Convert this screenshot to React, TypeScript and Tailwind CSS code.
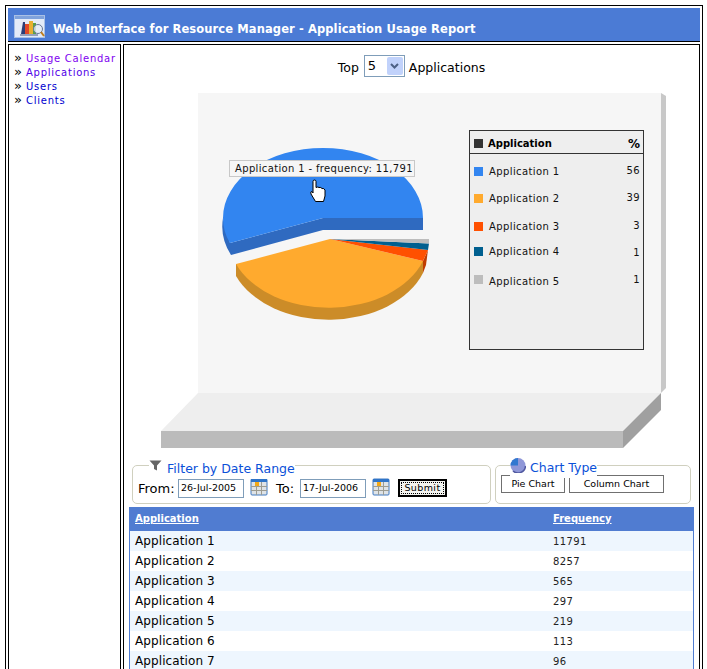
const dv = "font-['DejaVu_Sans',Verdana,sans-serif]";

function HeaderIcon() {
  return (
    <svg width="32" height="23" viewBox="0 0 32 23" className="shrink-0">
      <rect x="0.5" y="0.5" width="30" height="22" fill="#e4ebf8" stroke="#a9c0e6" />
      <rect x="1" y="1" width="29" height="3" fill="#7fa2dc" />
      <path d="M7 19 L9 7 L11 7 L11 19 Z" fill="#2c3e78" />
      <rect x="11" y="9" width="4" height="10" fill="#e04828" />
      <rect x="15" y="6" width="4" height="13" fill="#e8b030" />
      <rect x="19" y="8" width="3" height="11" fill="#58a048" />
      <path d="M6 20 H24" stroke="#44557f" strokeWidth="1" />
      <circle cx="24" cy="14" r="4.5" fill="#e6edf6" fillOpacity="0.8" stroke="#6a7896" />
      <path d="M27 17 L30 21" stroke="#c08020" strokeWidth="2" />
    </svg>
  );
}

function Chart() {
  return (
    <svg width="575" height="372" viewBox="124 84 575 372" className="block" fontFamily="'DejaVu Sans',Verdana,sans-serif">
      <rect x="198" y="93" width="463" height="300" fill="#f6f6f6" />
      <path d="M661 93 L666 96 V388 L661 393 Z" fill="#c8c8c8" />
      <path d="M198 393 H661 L623 431 H161 Z" fill="#eeeeee" />
      <rect x="161" y="431" width="462" height="17" fill="#bbbbbb" />
      <path d="M623 431 L661 393 V410 L623 448 Z" fill="#a0a0a0" />

      {/* blue slice */}
      <path d="M223 218 A100 70 0 0 0 231 255 L323 230 H423 V218 H323 L230 243 Z" fill="#2f6ac0" />
      <path d="M323 218 H423 A100 70 0 0 0 223 218 Q223 232 230 243 Z" fill="#3285f0" />

      {/* lower pie sides */}
      <path d="M236 264 V276 A100 70 0 0 0 423 273 V261 Z" fill="#cc8c28" />
      <path d="M423 261 L428 250 L426 265 L423 273 Z" fill="#c03c00" />
      {/* lower pie tops */}
      <path d="M330 239 L236 264 A100 70 0 0 0 423 261 Z" fill="#ffaa2e" />
      <path d="M330 239 L423 261 L428 250 Z" fill="#ff5000" />
      <path d="M330 239 L428 250 L429 243.5 Z" fill="#005f8f" />
      <path d="M330 239 L429 243.5 L429 239 Z" fill="#bdbdbd" />

      {/* legend */}
      <rect x="469.5" y="130.5" width="174" height="219" fill="#eeeeee" stroke="#333333" />
      <path d="M470 153.5 H643" stroke="#333333" />
      <rect x="474" y="139" width="9" height="9" fill="#333333" />
      <text x="488" y="147" fontSize="10" fontWeight="700" fill="#000">Application</text>
      <text x="640" y="148" fontSize="12" fontWeight="700" textAnchor="end" fill="#000">%</text>
      {[
        ["Application 1", "56", 167, "#3285f0", 175, 174],
        ["Application 2", "39", 194, "#ffaa2e", 202, 201],
        ["Application 3", "3", 222, "#ff5000", 230, 229],
        ["Application 4", "1", 247, "#005f8f", 255, 256],
        ["Application 5", "1", 275, "#bdbdbd", 285, 283],
      ].map(([name, pct, y, color, ty, py]) => (
        <g key={name as string}>
          <rect x="474" y={y as number} width="9" height="9" fill={color as string} />
          <text x="489" y={ty as number} fontSize="10" letterSpacing="0.4" fill="#111">{name}</text>
          <text x="640" y={py as number} fontSize="10" letterSpacing="0.4" textAnchor="end" fill="#111">{pct}</text>
        </g>
      ))}

      {/* tooltip */}
      <rect x="229.5" y="160.5" width="185" height="16" fill="#f6f6f6" stroke="#c8c8c8" />
      <text x="235" y="172" fontSize="10" letterSpacing="0.35" fill="#111">Application 1 - frequency: 11,791</text>

      {/* hand cursor */}
      <path
        d="M313 181.5 Q313 180 314.5 180 Q316 180 316 181.5 V187.5 Q318 186.5 319 187.5 Q321 187 322 188.5 Q324 188 325 190 V196 L323.5 201.5 H315.5 L311 194 Q310 191.5 312 191.5 L313 193 Z"
        fill="#fff"
        stroke="#000"
        strokeWidth="1"
      />
    </svg>
  );
}

function Cal() {
  return (
    <svg width="18" height="18" viewBox="0 0 18 18" className="shrink-0">
      <rect x="1" y="1" width="16" height="16" rx="1" fill="#dfe3e6" stroke="#3f78c0" />
      <rect x="1" y="1" width="16" height="3" fill="#2f74c8" />
      <path d="M1 8.5 H17 M1 12.5 H17 M6.5 4 V17 M11.5 4 V17" stroke="#9c9c92" />
      <rect x="5" y="4" width="4" height="4" fill="#f2a818" />
    </svg>
  );
}

const rows = [
  ["Application 1", "11791"],
  ["Application 2", "8257"],
  ["Application 3", "565"],
  ["Application 4", "297"],
  ["Application 5", "219"],
  ["Application 6", "113"],
  ["Application 7", "96"],
];

export default function App() {
  return (
    <div className={`w-[707px] h-[669px] overflow-hidden bg-white pt-[5px] pl-[5px] ${dv}`}>
      <div className="w-[698px] h-[700px] border border-black p-[2px]">
        <div className="h-[34px] bg-[#4b7bd5] border-b border-black flex items-center pl-[6px] gap-[7px]">
          <span className="pt-[3px]"><HeaderIcon /></span>
          <span className="pt-[10px] text-white font-bold text-[11.5px] tracking-[0.1px] whitespace-nowrap">
            Web Interface for Resource Manager - Application Usage Report
          </span>
        </div>
        <div className="flex gap-[2px] mt-[2px]">
          <aside className="w-[113px] h-[700px] border border-black pt-[6px] pl-[5px] shrink-0 text-[10px] tracking-[0.75px]">
            {[
              ["Usage Calendar", "text-[#8000f0]"],
              ["Applications", "text-[#5000e8]"],
              ["Users", "text-[#0000d0]"],
              ["Clients", "text-[#0000d0]"],
            ].map(([t, c]) => (
              <div key={t} className="h-[14px] flex items-center whitespace-nowrap">
                <span className="w-[12px] text-black text-[13px] tracking-normal">»</span>
                <span className={c}>{t}</span>
              </div>
            ))}
          </aside>
          <main className="flex-1 h-[700px] border border-black">
            <div className="h-[39px] pt-[2px] flex items-center justify-center gap-[4px] text-[12.5px] text-black">
              <span className="pt-[5px]">Top</span>
              <div className="ml-[1px] w-[41px] h-[22px] border border-[#7f9db9] flex items-center justify-between pl-[3px] pr-[1px] text-[13px]">
                <span>5</span>
                <span className="w-[16px] h-[18px] bg-[#c1d2fb] rounded-[2px] flex items-center justify-center">
                  <svg width="9" height="6" viewBox="0 0 9 6">
                    <path d="M1 1 L4.5 4.5 L8 1" fill="none" stroke="#4d6185" strokeWidth="2" />
                  </svg>
                </span>
              </div>
              <span className="pt-[5px]">Applications</span>
            </div>
            <Chart />
            <div className="flex gap-[4px] pl-[8px] h-[51px] pt-[9px]">
              <fieldset className="relative w-[359px] h-[39px] border border-[#d0d0bf] rounded-[5px] pl-[5px] m-0">
                <div className="absolute -top-[7px] left-[16px] bg-white flex items-start gap-[5px] text-[12.5px] text-[#0a50d8]">
                  <svg width="13" height="11" viewBox="0 0 13 11" className="mt-[1px]">
                    <path d="M0.5 0.5 H12.5 L8 5.5 V10.5 L5 9 V5.5 Z" fill="#666" />
                  </svg>
                  <span className="mt-[1px]">Filter by Date Range</span>
                </div>
                <div className="flex items-center h-full pt-[7px] text-[13px] text-black">
                  <span className="w-[40px] pt-[1px]">From:</span>
                  <span className="w-[66px] h-[19px] border border-[#7f9db9] text-[9.5px] pl-[2px] flex items-center">26-Jul-2005</span>
                  <span className="ml-[6px] -mt-[2px]"><Cal /></span>
                  <span className="ml-[8px] w-[24px] pt-[1px]">To:</span>
                  <span className="w-[66px] h-[19px] border border-[#7f9db9] text-[9.5px] pl-[2px] flex items-center">17-Jul-2006</span>
                  <span className="ml-[6px] -mt-[2px]"><Cal /></span>
                  <span className="ml-[8px] w-[49px] h-[18px] border-2 border-black bg-[#f4f4f0] flex items-center justify-center p-[1px]">
                    <span className="w-full h-full border border-dotted border-black text-[9.5px] tracking-[0.4px] flex items-center justify-center">Submit</span>
                  </span>
                </div>
              </fieldset>
              <fieldset className="relative w-[196px] h-[39px] border border-[#d0d0bf] rounded-[5px] m-0">
                <div className="absolute -top-[9px] left-[14px] bg-white flex items-start gap-[4px] text-[12.5px] text-[#0a50d8]">
                  <svg width="16" height="16" viewBox="0 0 16 16">
                    <circle cx="8" cy="8.5" r="7.5" fill="#8f97d8" />
                    <path d="M8 8.5 H0.5 A7.5 7.5 0 0 1 8 1 Z" fill="#3278d0" />
                    <path d="M3 14 A7.5 7.5 0 0 0 15.5 9" stroke="#5058a0" strokeWidth="1.5" fill="none" />
                  </svg>
                  <span className="mt-[2px]">Chart Type</span>
                </div>
                <div className="flex gap-[4px] pl-[5px] pt-[9px] text-[9.5px] text-black">
                  <span className="w-[64px] h-[18px] border border-[#707070] bg-white flex items-center justify-center">Pie Chart</span>
                  <span className="w-[95px] h-[18px] border border-[#707070] bg-white flex items-center justify-center">Column Chart</span>
                </div>
              </fieldset>
            </div>
            <div className="ml-[5px] w-[565px] border-x border-[#507cd1]">
              <div className="h-[24px] pb-[1px] bg-[#507cd1] flex items-center text-white font-bold text-[10px] underline">
                <span className="w-[423px] pl-[5px]">Application</span>
                <span>Frequency</span>
              </div>
              {rows.map(([a, f], i) => (
                <div key={a} className={`h-[20px] flex items-center text-black ${i % 2 === 0 ? "bg-[#eef6fe]" : "bg-white"}`}>
                  <span className="w-[423px] pl-[5px] pb-[1px] text-[12px] tracking-[0.1px]">{a}</span>
                  <span className="text-[10px] tracking-[0.4px] text-[#222]">{f}</span>
                </div>
              ))}
            </div>
          </main>
        </div>
      </div>
    </div>
  );
}
